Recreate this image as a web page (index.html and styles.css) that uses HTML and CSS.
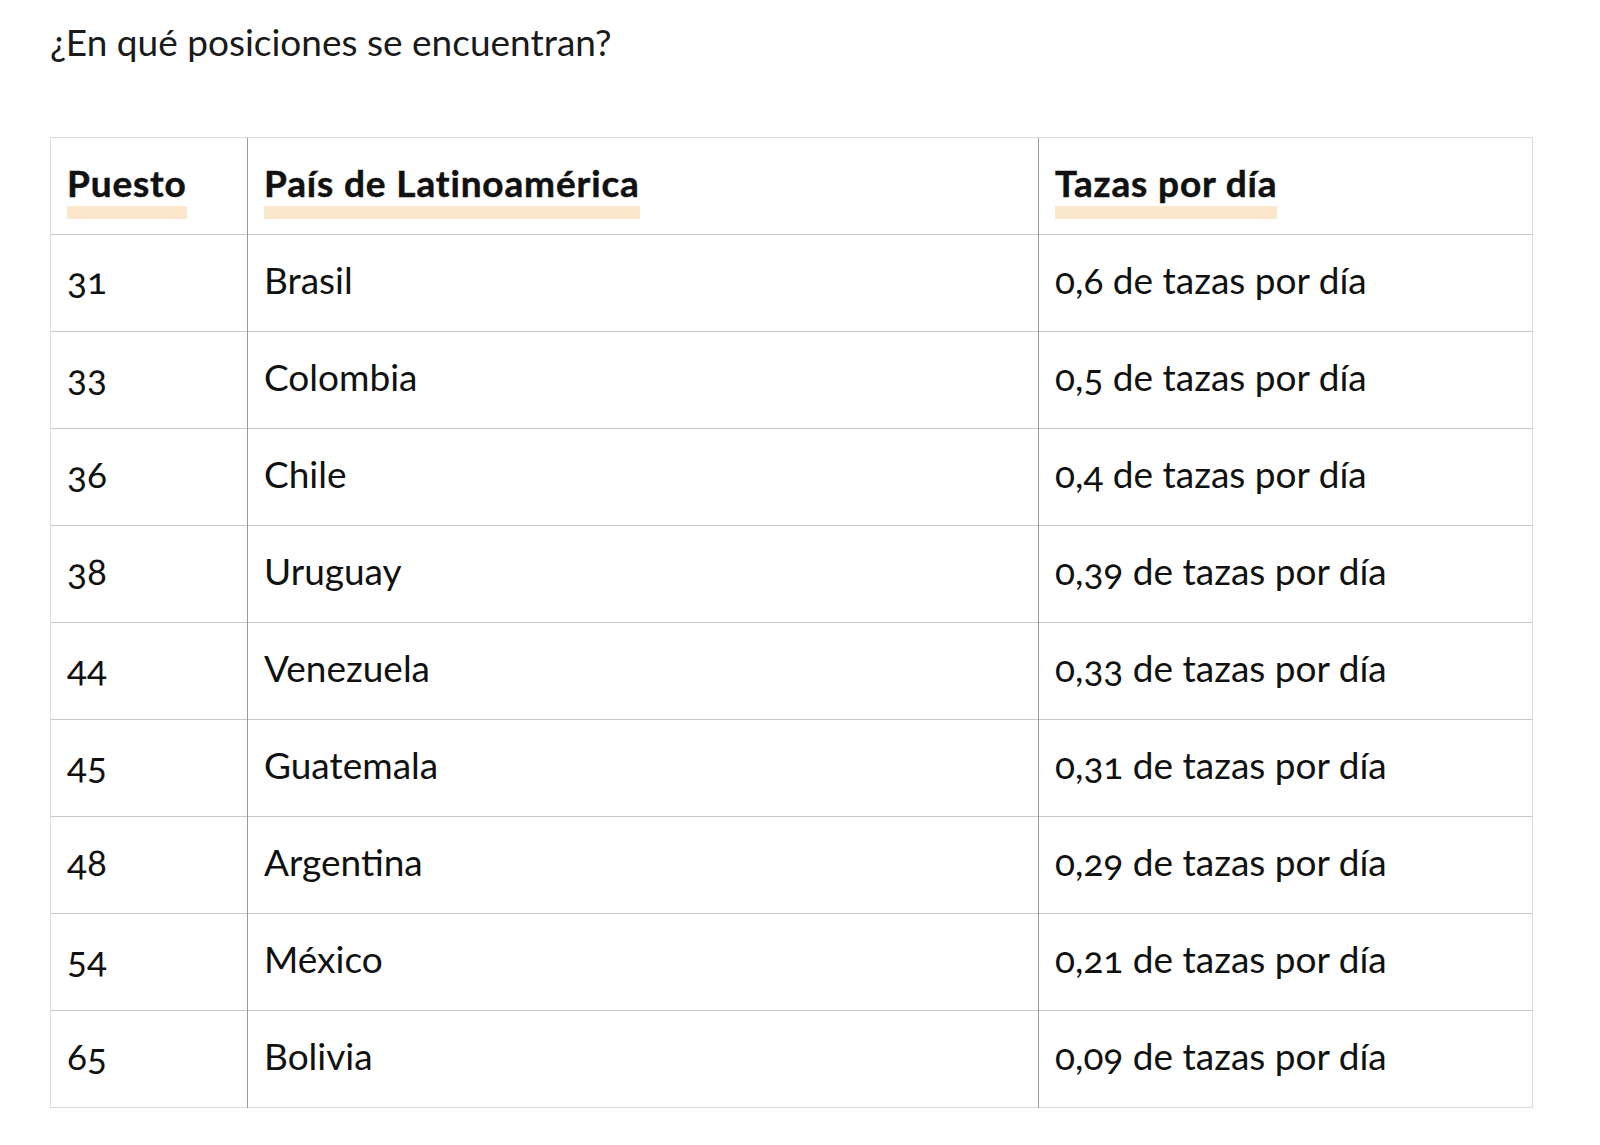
FILE: index.html
```html
<!DOCTYPE html>
<html lang="es">
<head>
<meta charset="utf-8">
<title>Tazas por día</title>
<link rel="stylesheet" href="styles.css">
</head>
<body>
<div class="page">
  <p class="title">¿En qué posiciones se encuentran?</p>
  <table class="rank">
    <colgroup>
      <col class="c1"><col class="c2"><col class="c3">
    </colgroup>
    <thead>
      <tr>
        <th><span class="hl">Puesto</span></th>
        <th><span class="hl">País de Latinoamérica</span></th>
        <th><span class="hl">Tazas por día</span></th>
      </tr>
    </thead>
    <tbody>
      <tr><td>31</td><td>Brasil</td><td>0,6 de tazas por día</td></tr>
      <tr><td>33</td><td>Colombia</td><td>0,5 de tazas por día</td></tr>
      <tr><td>36</td><td>Chile</td><td>0,4 de tazas por día</td></tr>
      <tr><td>38</td><td>Uruguay</td><td>0,39 de tazas por día</td></tr>
      <tr><td>44</td><td>Venezuela</td><td>0,33 de tazas por día</td></tr>
      <tr><td>45</td><td>Guatemala</td><td>0,31 de tazas por día</td></tr>
      <tr><td>48</td><td>Argentina</td><td>0,29 de tazas por día</td></tr>
      <tr><td>54</td><td>México</td><td>0,21 de tazas por día</td></tr>
      <tr><td>65</td><td>Bolivia</td><td>0,09 de tazas por día</td></tr>
    </tbody>
  </table>
</div>
</body>
</html>
```
FILE: styles.css
```css
html, body {
  margin: 0;
  padding: 0;
  background: #ffffff;
}
body {
  font-family: "Lato", "Noto Sans", sans-serif;
  color: #111111;
  font-variant-numeric: oldstyle-nums;
}
.page {
  padding: 17px 68px 0 50px;
}
.title {
  margin: 0;
  font-size: 37px;
  line-height: 50px;
  color: #1a1a1a;
}
.rank {
  margin-top: 70px;
  width: 1482px;
  border-collapse: collapse;
  table-layout: fixed;
  border: 1px solid #dcdcdc;
}
.c1 { width: 197px; }
.c2 { width: 791px; }
.c3 { width: 494px; }
.rank th, .rank td {
  text-align: left;
  border-top: 1px solid #c8c8c8;
  border-left: 1px solid #9a9a9a;
  font-size: 37px;
}
.rank tr > :first-child { border-left: 1px solid #dcdcdc; }
.rank thead th { border-top: 1px solid #dcdcdc; }
.rank th {
  font-weight: 700;
  letter-spacing: 0.85px;
  -webkit-text-stroke: 0.5px #111111;
  vertical-align: top;
  padding: 22px 16px 0;
  height: 74px;
}
.rank td {
  vertical-align: middle;
  font-weight: 400;
  padding: 0 16px 8px;
  height: 88px;
}
.hl {
  display: inline-block;
  line-height: 44px;
  border-bottom: 13px solid #fbe7cb;
  padding-bottom: 1px;
}
```
